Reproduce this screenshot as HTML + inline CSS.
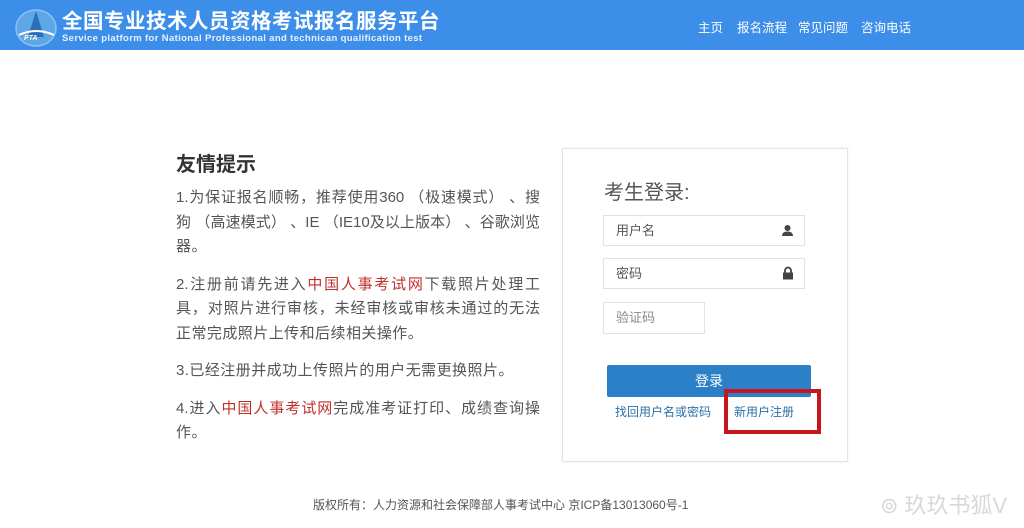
<!DOCTYPE html>
<html><head><meta charset="utf-8"><style>
*{margin:0;padding:0;box-sizing:border-box}
body{width:1024px;height:528px;background:#fff;position:relative;overflow:hidden;font-family:"Liberation Sans","Noto Sans CJK SC",sans-serif;color:#444}
.hd{position:absolute;left:0;top:0;width:1024px;height:50px;background:#3c8ee8}
.ab{position:absolute;white-space:nowrap}
.tip{position:absolute;left:176px;top:186px;width:364px;font-size:15px;line-height:24.5px;color:#555;letter-spacing:0.45px}
.tip p{margin-bottom:13px}
.tip .j{text-align:justify;text-align-last:justify;white-space:nowrap;letter-spacing:0}
.red{color:#c0302a}
.inp{position:absolute;border:1px solid #e2e2e2;background:#fff;font-size:13px;color:#555;padding-left:12px;line-height:29px}
.nav{position:absolute;top:17px;font-size:12.5px;color:#fff}
</style></head><body>
<div class="hd">
<svg class="ab" style="left:14px;top:7px" width="44" height="40" viewBox="0 0 44 40">
<ellipse cx="22" cy="21" rx="20" ry="18" fill="#5ea6e6" stroke="#8cc3f0" stroke-width="1.5"/>
<path d="M22 4 L14 30 L30 30 Z" fill="#2a6fb8"/>
<path d="M5 28 Q22 20 40 28" stroke="#fff" stroke-width="2" fill="none"/>
<text x="10" y="33" font-size="7" font-weight="bold" fill="#fff" font-style="italic">PTA</text>
</svg>
<div class="ab" style="left:62px;top:4px;font-size:20.5px;font-weight:bold;color:#fff;letter-spacing:0.5px">全国专业技术人员资格考试报名服务平台</div>
<div class="ab" style="left:62px;top:33px;font-size:9.5px;font-weight:bold;color:#e8f2ff;letter-spacing:0.35px">Service platform for National Professional and technican qualification test</div>
<div class="nav" style="left:698px">主页</div>
<div class="nav" style="left:737px">报名流程</div>
<div class="nav" style="left:798px">常见问题</div>
<div class="nav" style="left:861px">咨询电话</div>
</div>
<div class="ab" style="left:176px;top:148px;font-size:20px;font-weight:bold;color:#333">友情提示</div>
<div class="tip">
<p><span class="j" style="display:block">1.为保证报名顺畅，推荐使用360 （极速模式） 、搜</span><span class="j" style="display:block">狗 （高速模式） 、IE （IE10及以上版本） 、谷歌浏览</span>器。</p>
<p><span class="j" style="display:block">2.注册前请先进入<span class="red">中国人事考试网</span>下载照片处理工</span><span class="j" style="display:block">具，对照片进行审核，未经审核或审核未通过的无法</span>正常完成照片上传和后续相关操作。</p>
<p>3.已经注册并成功上传照片的用户无需更换照片。</p>
<p><span class="j" style="display:block">4.进入<span class="red">中国人事考试网</span>完成准考证打印、成绩查询操</span>作。</p>
</div>
<div class="ab" style="left:562px;top:148px;width:286px;height:314px;border:1px solid #e4e4e4;box-shadow:0 0 3px #eee"></div>
<div class="ab" style="left:604px;top:176px;font-size:20px;color:#555">考生登录:</div>
<div class="inp" style="left:603px;top:215px;width:202px;height:31px">用户名<svg class="ab" style="right:10px;top:8px" width="13" height="13" viewBox="0 0 13 13"><circle cx="6.5" cy="4" r="3" fill="#444"/><path d="M1 12 Q1 7.5 6.5 7.5 Q12 7.5 12 12Z" fill="#444"/></svg></div>
<div class="inp" style="left:603px;top:258px;width:202px;height:31px">密码<svg class="ab" style="right:10px;top:7px" width="12" height="14" viewBox="0 0 12 14"><path d="M3 7V4.5a3 3 0 0 1 6 0V7" stroke="#444" stroke-width="1.8" fill="none"/><rect x="1" y="6.5" width="10" height="7" fill="#444"/></svg></div>
<div class="inp" style="left:603px;top:302px;width:102px;height:32px;color:#888">验证码</div>
<div class="ab" style="left:607px;top:365px;width:204px;height:32px;background:#2b80c8;border-radius:2px;color:#fff;font-size:14px;text-align:center;line-height:32px">登录</div>
<div class="ab" style="left:615px;top:403px;font-size:12px;color:#2a6fa8">找回用户名或密码</div>
<div class="ab" style="left:734px;top:403px;font-size:12px;color:#2a6fa8">新用户注册</div>
<div class="ab" style="left:724px;top:389px;width:97px;height:45px;border:4px solid #c4161c"></div>
<div class="ab" style="left:313px;top:496px;font-size:12px;color:#555">版权所有：人力资源和社会保障部人事考试中心 京ICP备13013060号-1</div>
<div class="ab" style="left:880px;top:488px;font-size:22px;color:#d8d8d8">⊚ 玖玖书狐V</div>
</body></html>
